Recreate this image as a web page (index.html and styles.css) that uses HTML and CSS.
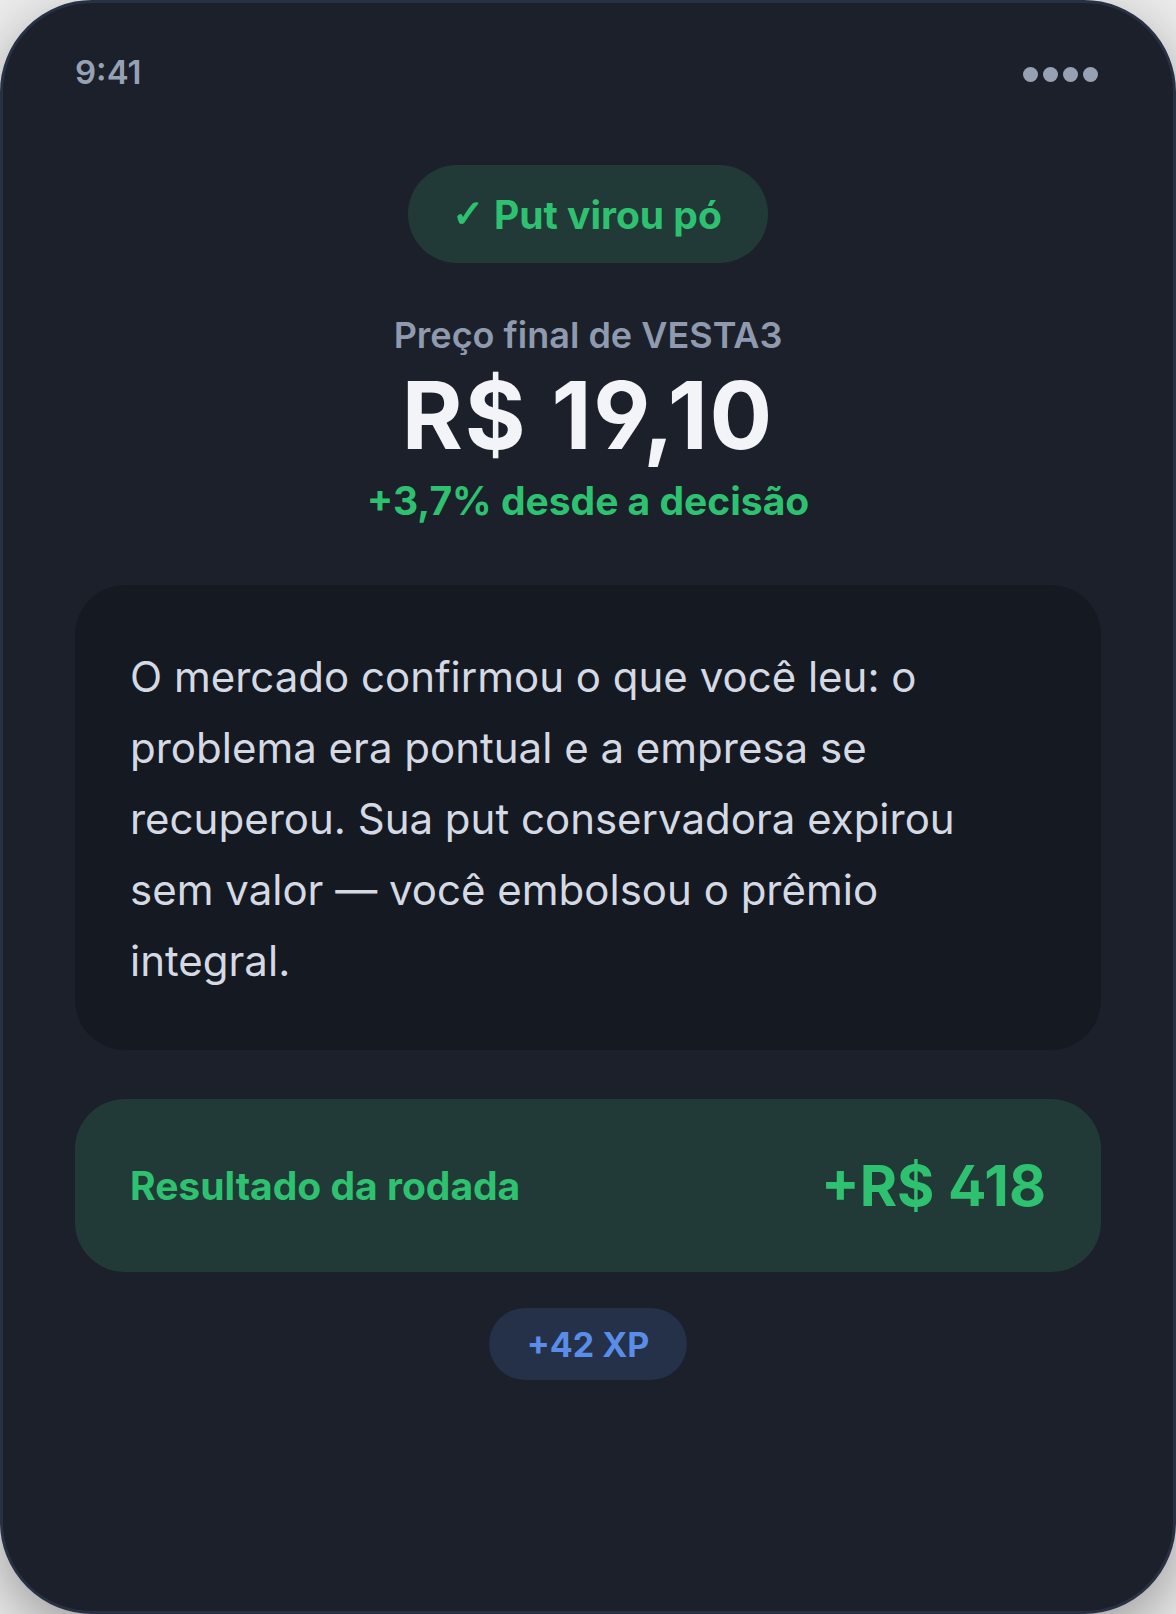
FILE: index.html
```html
<!DOCTYPE html>
<html lang="pt-BR">
<head>
  <meta charset="UTF-8">
  <meta name="viewport" content="width=device-width, initial-scale=1.0">
  <title>Resultado da rodada</title>
  <link rel="stylesheet" href="styles.css">
</head>
<body>
  <div class="phone">
    <div class="status-bar">
      <span class="time">9:41</span>
      <span class="dots"><i></i><i></i><i></i><i></i></span>
    </div>

    <div class="outcome">
      <div class="badge"><span class="check">✓</span>Put virou pó</div>
      <div class="price-label">Preço final de VESTA3</div>
      <div class="price">R$ 19,10</div>
      <div class="change">+3,7% desde a decisão</div>
    </div>

    <div class="story">
      <p>O mercado confirmou o que você leu: o problema era pontual e a empresa se recuperou. Sua put conservadora expirou sem valor — você embolsou o prêmio integral.</p>
    </div>

    <div class="result">
      <span class="result-label">Resultado da rodada</span>
      <span class="result-value">+R$ 418</span>
    </div>

    <div class="xp-row">
      <span class="xp">+42 XP</span>
    </div>
  </div>
</body>
</html>
```

FILE: styles.css
```css
* {
  box-sizing: border-box;
}
body {
  margin: 0;
  background: #ececec;
  font-family: Inter, "Noto Sans", sans-serif;
}
.phone {
  width: 1176px;
  height: 1614px;
  background: #1b202b;
  border: 3px solid #283144;
  border-radius: 92px;
  box-shadow: 0 20px 60px rgba(0, 0, 0, 0.35);
  padding: 0 72px;
  overflow: hidden;
}
.status-bar {
  display: flex;
  justify-content: space-between;
  align-items: center;
  padding: 49px 3px 0 0;
  height: 89px;
}
.time {
  font-size: 33px;
  line-height: 40px;
  font-weight: 600;
  color: #97a1b4;
}
.dots {
  display: flex;
  gap: 5px;
  margin-top: 4px;
}
.dots i {
  width: 15px;
  height: 15px;
  border-radius: 50%;
  background: #97a1b4;
}
.outcome {
  display: flex;
  flex-direction: column;
  align-items: center;
  text-align: center;
}
.badge {
  margin-top: 73px;
  height: 98px;
  padding: 0 46px 0 44px;
  display: inline-flex;
  align-items: center;
  border-radius: 49px;
  background: #213a37;
  color: #2ec270;
  font-size: 39px;
  font-weight: 700;
}
.check {
  font-family: "DejaVu Sans", sans-serif;
  font-weight: 400;
  font-size: 38px;
  -webkit-text-stroke: 1.2px #2ec270;
  margin-right: 10px;
}
.price-label {
  margin-top: 52px;
  font-size: 36px;
  line-height: 40px;
  font-weight: 600;
  color: #8f9aae;
}
.price {
  margin-top: 15px;
  font-size: 93px;
  line-height: 90px;
  font-weight: 700;
  letter-spacing: 0.02em;
  font-feature-settings: "ss01";
  color: #f3f4f8;
}
.change {
  margin-top: 18px;
  font-size: 39px;
  line-height: 46px;
  font-weight: 700;
  color: #2ec270;
}
.story {
  margin-top: 61px;
  background: #151a22;
  border-radius: 50px;
  padding: 56px 55px 54px;
}
.story p {
  margin: 0;
  max-width: 880px;
  font-size: 42px;
  line-height: 71px;
  color: #d5d9e3;
}
.result {
  margin-top: 49px;
  height: 173px;
  padding: 0 55px;
  display: flex;
  justify-content: space-between;
  align-items: center;
  background: #213a37;
  border-radius: 50px;
  color: #2ec270;
  font-weight: 700;
}
.result-label {
  font-size: 39px;
}
.result-value {
  font-size: 57px;
  font-feature-settings: "ss01";
}
.xp-row {
  margin-top: 36px;
  display: flex;
  justify-content: center;
}
.xp {
  height: 72px;
  padding: 0 38px;
  display: inline-flex;
  align-items: center;
  border-radius: 36px;
  background: #243149;
  color: #5a8de8;
  font-size: 34px;
  font-weight: 700;
}
```
